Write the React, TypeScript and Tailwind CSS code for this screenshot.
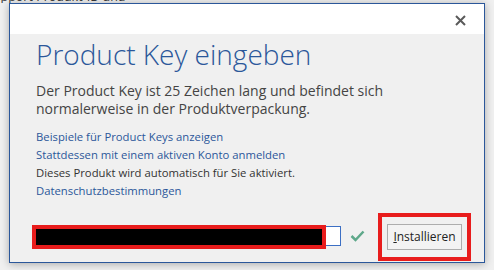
import React from "react";

const font = { fontFamily: '"Segoe UI", "Open Sans", "Noto Sans", sans-serif' };

export default function App() {
  const links = [
    { text: "Beispiele für Product Keys anzeigen", link: true },
    { text: "Stattdessen mit einem aktiven Konto anmelden", link: true },
    { text: "Dieses Produkt wird automatisch für Sie aktiviert.", link: false },
  ];

  return (
    <div className="w-[494px] h-[270px] bg-[#f0f0f0] overflow-hidden" style={font}>
      {/* page text behind the dialog */}
      <div className="h-[3px] overflow-hidden">
        <p className="-mt-[11px] -ml-[14px] text-[12.5px] leading-[16px] text-[#333] whitespace-nowrap">Support Produkt-ID und</p>
      </div>

      {/* dialog */}
      <div className="ml-[9px] w-[476px] h-[260px] border border-[#2b579a] bg-[#f0f0f0] flex flex-col shadow-[0_1px_8px_rgba(0,0,0,0.3)]">
        <div className="h-[30px] bg-white flex items-center justify-end pr-[18px] shrink-0">
          <svg width="11" height="11" viewBox="0 0 11 11" className="mt-[2px]">
            <path d="M1 1 L10 10 M10 1 L1 10" stroke="#5a5a5a" strokeWidth="2" />
          </svg>
        </div>

        <div className="flex-1 flex flex-col pl-[26px]">
          <h1 className="mt-[3px] text-[28px] leading-[34px] font-light text-[#2b579a]">Product Key eingeben</h1>
          <p className="mt-[11px] text-[14px] leading-[18px] text-[#444]">
            Der Product Key ist 25 Zeichen lang und befindet sich
            <br />
            normalerweise in der Produktverpackung.
          </p>

          <div className="mt-[10px] flex flex-col text-[11.3px] leading-[18px]">
            {links.map((l) => (
              <span key={l.text} className={l.link ? "text-[#2b579a]" : "text-[#333]"}>
                {l.text}
              </span>
            ))}
            <span className="text-[#2b579a]">Datenschutzbestimmungen</span>
          </div>

          <div className="mt-[13px] flex items-start">
            <div className="relative mt-[13px] w-[305px] h-[20px] border border-[#3c6fc4] bg-white">
              <div className="absolute left-[-5px] top-[-2px] w-[294px] h-[24px] border-4 border-[#e81c1c] bg-black" />
            </div>
            <svg width="15" height="12" viewBox="0 0 15 12" className="ml-[9px] mt-[17px]">
              <path d="M1.5 6 L5.5 10 L13.5 1.5" fill="none" stroke="#5ea88a" strokeWidth="2.5" />
            </svg>
            <div className="ml-[13px] w-[93px] h-[48px] border-4 border-[#e81c1c] flex items-center justify-center">
              <button className="w-[75px] h-[26px] border border-[#adadad] bg-[#f3f3f3] text-[12px] text-[#222] leading-none">
                <span className="underline">I</span>nstallieren
              </button>
            </div>
          </div>
        </div>
      </div>
    </div>
  );
}
